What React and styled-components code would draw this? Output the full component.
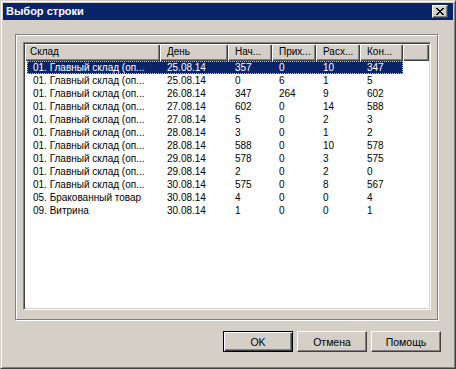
import React from "react";
import styled, { createGlobalStyle } from "styled-components";

const Global = createGlobalStyle`
  html, body { margin: 0; padding: 0; background: #d4d0c8; }
  body { font-family: "Liberation Sans", Arial, sans-serif; font-size: 10px; }
  * { box-sizing: border-box; }
`;

const Window = styled.div`
  width: 456px;
  height: 369px;
  background: #d4d0c8;
  border: 1px solid;
  border-color: #d4d0c8 #404040 #404040 #d4d0c8;
  box-shadow: inset 1px 1px 0 #ffffff, inset -1px -1px 0 #808080;
  padding: 2px;
  display: flex;
  flex-direction: column;
`;

const TitleBar = styled.div`
  height: 17px;
  background: #0a246a;
  display: flex;
  align-items: center;
  padding-left: 3px;
  padding-right: 5px;
`;

const Title = styled.div`
  flex: 1;
  color: #ffffff;
  font-weight: bold;
  font-size: 11px;
  line-height: 17px;
  white-space: nowrap;
`;

const CloseButton = styled.div`
  width: 16px;
  height: 13px;
  background: #d4d0c8;
  border: 1px solid;
  border-color: #ffffff #404040 #404040 #ffffff;
  box-shadow: inset -1px -1px 0 #808080;
  display: flex;
  align-items: center;
  justify-content: center;
  padding-bottom: 1px;
`;

const Client = styled.div`
  flex: 1;
  display: flex;
  flex-direction: column;
  padding: 14px 12px 12px 12px;
`;

const GroupBox = styled.div`
  height: 286px;
  margin-right: 3px;
  border: 1px solid #808080;
  box-shadow: inset 1px 1px 0 #ffffff, 1px 1px 0 #ffffff;
  padding: 7px 6px 9px 7px;
`;

const ListView = styled.div`
  width: 408px;
  height: 268px;
  background: #ffffff;
  border: 1px solid;
  border-color: #808080 #ffffff #ffffff #808080;
  box-shadow: inset 1px 1px 0 #404040, inset -1px -1px 0 #d4d0c8;
  padding: 1px;
  overflow: hidden;
`;

const Header = styled.div`
  display: flex;
  height: 17px;
`;

const HeaderCell = styled.div`
  width: ${(p) => (p.$w ? `${p.$w}px` : "auto")};
  flex: ${(p) => (p.$w ? "none" : "1")};
  height: 17px;
  background: #d4d0c8;
  box-shadow: inset 1px 1px 0 #ffffff, inset -1px -1px 0 #404040,
    inset -2px -2px 0 #808080;
  padding-left: ${(p) => p.$pad}px;
  line-height: 16px;
  color: #000;
  white-space: nowrap;
  overflow: hidden;
`;

const Row = styled.div`
  display: flex;
  width: max-content;
  margin-left: 2px;
  height: 13px;
  line-height: 13px;
  background: ${(p) => (p.$selected ? "#0a246a" : "transparent")};
  color: ${(p) => (p.$selected ? "#ffffff" : "#000000")};
  outline: ${(p) => (p.$selected ? "1px dotted #d8c878" : "none")};
  outline-offset: -1px;
`;

const Cell = styled.div`
  width: ${(p) => p.$w}px;
  padding-left: ${(p) => p.$pad}px;
  white-space: nowrap;
  overflow: hidden;
`;

const ButtonRow = styled.div`
  display: flex;
  justify-content: flex-end;
  gap: 4px;
  margin-top: 11px;
`;

const Button = styled.div`
  width: 70px;
  height: 21px;
  background: #d4d0c8;
  border: 1px solid;
  border-color: ${(p) =>
    p.$default ? "#000000" : "#ffffff #404040 #404040 #ffffff"};
  box-shadow: ${(p) =>
    p.$default
      ? "inset 1px 1px 0 #ffffff, inset -1px -1px 0 #404040, inset -2px -2px 0 #808080"
      : "inset -1px -1px 0 #808080"};
  display: flex;
  align-items: center;
  justify-content: center;
  color: #000;
  font-size: 10.5px;
`;

const cols = [
  { title: "Склад", w: 135 },
  { title: "День", w: 68 },
  { title: "Нач...", w: 44 },
  { title: "Прих...", w: 44 },
  { title: "Расх...", w: 44 },
  { title: "Кон...", w: 43 },
];

const G = "01. Главный склад (оп...";
const rows = [
  [G, "25.08.14", "357", "0", "10", "347"],
  [G, "25.08.14", "0", "6", "1", "5"],
  [G, "26.08.14", "347", "264", "9", "602"],
  [G, "27.08.14", "602", "0", "14", "588"],
  [G, "27.08.14", "5", "0", "2", "3"],
  [G, "28.08.14", "3", "0", "1", "2"],
  [G, "28.08.14", "588", "0", "10", "578"],
  [G, "29.08.14", "578", "0", "3", "575"],
  [G, "29.08.14", "2", "0", "2", "0"],
  [G, "30.08.14", "575", "0", "8", "567"],
  ["05. Бракованный товар", "30.08.14", "4", "0", "0", "4"],
  ["09. Витрина", "30.08.14", "1", "0", "0", "1"],
];

const CloseIcon = () => (
  <svg width="8" height="7" viewBox="0 0 8 7" shapeRendering="crispEdges">
    <g fill="#000">
      <rect x="0" y="0" width="2" height="1" />
      <rect x="6" y="0" width="2" height="1" />
      <rect x="1" y="1" width="2" height="1" />
      <rect x="5" y="1" width="2" height="1" />
      <rect x="2" y="2" width="4" height="1" />
      <rect x="3" y="3" width="2" height="1" />
      <rect x="2" y="4" width="4" height="1" />
      <rect x="1" y="5" width="2" height="1" />
      <rect x="5" y="5" width="2" height="1" />
      <rect x="0" y="6" width="2" height="1" />
      <rect x="6" y="6" width="2" height="1" />
    </g>
  </svg>
);

export default function App() {
  return (
    <>
      <Global />
      <Window>
        <TitleBar>
          <Title>Выбор строки</Title>
          <CloseButton>
            <CloseIcon />
          </CloseButton>
        </TitleBar>
        <Client>
          <GroupBox>
            <ListView>
              <Header>
                {cols.map((c, i) => (
                  <HeaderCell key={c.title} $w={c.w} $pad={i === 0 ? 5 : 7}>
                    {c.title}
                  </HeaderCell>
                ))}
                <HeaderCell $pad={0} />
              </Header>
              {rows.map((r, ri) => (
                <Row key={ri} $selected={ri === 0}>
                  {r.map((v, ci) => (
                    <Cell
                      key={ci}
                      $w={ci === 0 ? cols[0].w - 2 : cols[ci].w}
                      $pad={ci === 0 ? 6 : 7}
                    >
                      {v}
                    </Cell>
                  ))}
                </Row>
              ))}
            </ListView>
          </GroupBox>
          <ButtonRow>
            <Button $default>OK</Button>
            <Button>Отмена</Button>
            <Button>Помощь</Button>
          </ButtonRow>
        </Client>
      </Window>
    </>
  );
}
